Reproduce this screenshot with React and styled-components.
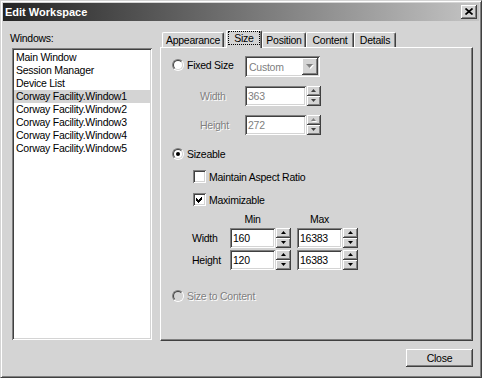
import React from 'react';
import styled, { createGlobalStyle, css } from 'styled-components';

const FACE = '#d4d4d4';

const GlobalStyle = createGlobalStyle`
  html, body { margin: 0; padding: 0; background: ${FACE}; }
  body {
    font-family: "Liberation Sans", Arial, sans-serif;
    font-size: 10.5px;
    letter-spacing: -0.25px;
    color: #000;
  }
  * { box-sizing: border-box; }
`;

const raised = css`
  box-shadow: inset -1px -1px #404040, inset 1px 1px #fff,
    inset -2px -2px #808080, inset 2px 2px ${FACE};
`;

const sunken = css`
  box-shadow: inset 1px 1px #808080, inset -1px -1px #fff,
    inset 2px 2px #404040, inset -2px -2px ${FACE};
`;

const Window = styled.div`
  width: 482px;
  height: 378px;
  display: flex;
  flex-direction: column;
  background: ${FACE};
  border: 1px solid;
  border-color: ${FACE} #404040 #404040 ${FACE};
  box-shadow: inset 1px 1px #fff, inset -1px -1px #808080;
  padding: 2px;
`;

const TitleBar = styled.div`
  height: 18px;
  flex: none;
  display: flex;
  align-items: center;
  justify-content: space-between;
  padding: 0 2px 0 2px;
  background: linear-gradient(90deg, #242424 0%, #c4c4c4 100%);
`;

const Title = styled.span`
  color: #fff;
  font-weight: bold;
  font-size: 11px;
  letter-spacing: 0;
`;

const CaptionButton = styled.div`
  width: 16px;
  height: 14px;
  background: ${FACE};
  ${raised};
  display: flex;
  align-items: center;
  justify-content: center;
  padding-bottom: 1px;
`;

const Main = styled.div`
  flex: 1;
  display: flex;
  gap: 8px;
  padding: 8px 6px 0 7px;
  min-height: 0;
`;

const LeftColumn = styled.div`
  width: 142px;
  flex: none;
  display: flex;
  flex-direction: column;
  padding-top: 3px;
`;

const FieldLabel = styled.div`
  height: 13px;
  line-height: 13px;
  margin-bottom: 3px;
`;

const ListBox = styled.div`
  flex: 1;
  margin: 0 0 1px 2px;
  background: #fff;
  ${sunken};
  padding: 3px 2px 2px 2px;
`;

const ListItem = styled.div`
  height: 13px;
  line-height: 13px;
  padding-left: 2px;
  white-space: nowrap;
  background: ${(p) => (p.$selected ? FACE : 'transparent')};
`;

const TabControl = styled.div`
  width: 313px;
  flex: none;
  display: flex;
  flex-direction: column;
`;

const TabStrip = styled.div`
  height: 18px;
  flex: none;
  display: flex;
  align-items: flex-end;
  padding-left: 2px;
`;

const Tab = styled.div`
  width: ${(p) => p.$width}px;
  height: ${(p) => (p.$selected ? 18 : 15)}px;
  margin-left: ${(p) => (p.$selected ? 2 : 0)}px;
  margin-bottom: ${(p) => (p.$selected ? -1 : 0)}px;
  position: relative;
  z-index: ${(p) => (p.$selected ? 1 : 0)};
  background: ${FACE};
  border-top: 1px solid #fff;
  border-left: 1px solid #fff;
  border-right: 1px solid #404040;
  border-radius: 2px 2px 0 0;
  box-shadow: inset -1px 0 #808080;
  display: flex;
  align-items: center;
  justify-content: center;
  padding-bottom: ${(p) => (p.$selected ? 3 : 0)}px;
  white-space: nowrap;
`;

const FocusLabel = styled.span`
  border: 1px dotted #000;
  width: 32px;
  text-align: center;
  height: 14px;
  line-height: 12px;
`;

const TabPanel = styled.div`
  flex: 1;
  border: 1px solid;
  border-color: #fff #404040 #404040 #fff;
  box-shadow: inset -1px -1px #808080;
  padding: 8px 0 0 11px;
  display: flex;
  flex-direction: column;
`;

const Row = styled.div`
  display: flex;
  align-items: center;
  margin-top: ${(p) => p.$gap || 0}px;
  padding-left: ${(p) => p.$indent || 0}px;
  height: ${(p) => p.$height}px;
`;

const Option = styled.label`
  display: flex;
  align-items: center;
  gap: 3px;
  width: ${(p) => (p.$width ? `${p.$width}px` : 'auto')};
  margin-top: ${(p) => (p.$lift ? -p.$lift * 2 : 0)}px;
  white-space: nowrap;
`;

const OptionText = styled.span`
  color: ${(p) => (p.$disabled ? '#808080' : '#000')};
  text-shadow: ${(p) => (p.$disabled ? '1px 1px #fff' : 'none')};
`;

const RadioOuter = styled.span`
  width: 12px;
  height: 12px;
  flex: none;
  border-radius: 50%;
  border: 1px solid;
  border-color: #808080 #fff #fff #808080;
  display: flex;
`;

const RadioInner = styled.span`
  flex: 1;
  border-radius: 50%;
  border: 1px solid;
  border-color: #404040 ${FACE} ${FACE} #404040;
  background: ${(p) => (p.$disabled ? FACE : '#fff')};
  display: flex;
  align-items: center;
  justify-content: center;
`;

const RadioDot = styled.span`
  width: 4px;
  height: 4px;
  border-radius: 50%;
  background: #000;
`;

const CheckBox = styled.span`
  width: 13px;
  height: 13px;
  flex: none;
  background: #fff;
  ${sunken};
  display: flex;
  align-items: center;
  justify-content: center;
`;

const Combo = styled.div`
  width: 75px;
  height: 21px;
  background: #fff;
  ${sunken};
  padding: 2px;
  display: flex;
  align-items: center;
`;

const ComboText = styled.span`
  flex: 1;
  padding-left: 2px;
  color: #808080;
`;

const ComboButton = styled.div`
  width: 16px;
  height: 17px;
  background: ${FACE};
  ${raised};
  display: flex;
  align-items: center;
  justify-content: center;
`;

const SideLabel = styled.span`
  width: ${(p) => p.$width}px;
  flex: none;
  color: ${(p) => (p.$disabled ? '#808080' : '#000')};
  text-shadow: ${(p) => (p.$disabled ? '1px 1px #fff' : 'none')};
`;

const SpinField = styled.div`
  display: flex;
  gap: 1px;
  height: 20px;
`;

const TextBox = styled.div`
  width: ${(p) => p.$width}px;
  height: 100%;
  background: #fff;
  ${sunken};
  padding: 0 3px;
  display: flex;
  align-items: center;
  color: ${(p) => (p.$disabled ? '#808080' : '#000')};
`;

const Spin = styled.div`
  width: ${(p) => p.$width}px;
  display: flex;
  flex-direction: column;
`;

const SpinButton = styled.div`
  flex: 1;
  background: ${FACE};
  ${raised};
  display: flex;
  align-items: center;
  justify-content: center;
`;

const LimitsGrid = styled.div`
  display: grid;
  grid-template-columns: 38px 67px 61px;
  grid-template-rows: 13px 20px 20px;
  row-gap: 2px;
  align-items: center;
  margin-top: 7px;
  padding-left: 20px;
`;

const ColumnHead = styled.span`
  width: 45px;
  text-align: center;
  line-height: 13px;
`;

const Footer = styled.div`
  flex: none;
  display: flex;
  justify-content: flex-end;
  padding: 8px 6px 8px 0;
`;

const PushButton = styled.button`
  width: 67px;
  height: 18px;
  padding: 0;
  border: none;
  background: ${FACE};
  ${raised};
  font: inherit;
  letter-spacing: inherit;
  color: #000;
`;

const Arrow = ({ down, color = '#000', shadow }) => (
  <svg width="6" height="4" viewBox="0 0 6 4" style={{ overflow: 'visible' }}>
    {shadow && (
      <polygon
        points={down ? '1,1 6,1 3.5,4' : '1,4 6,4 3.5,1'}
        fill="#fff"
      />
    )}
    <polygon points={down ? '0,0 5,0 2.5,3' : '0,3 5,3 2.5,0'} fill={color} />
  </svg>
);

const ComboArrow = () => (
  <svg width="8" height="5" viewBox="0 0 8 5" style={{ overflow: 'visible' }}>
    <polygon points="1,1 8,1 4.5,5" fill="#fff" />
    <polygon points="0,0 7,0 3.5,4" fill="#808080" />
  </svg>
);

const CloseGlyph = () => (
  <svg width="8" height="7" viewBox="0 0 8 7">
    <path d="M0.5 0.5 L7.5 6.5 M7.5 0.5 L0.5 6.5" stroke="#000" strokeWidth="1.7" />
  </svg>
);

const CheckMark = () => (
  <svg width="7" height="7" viewBox="0 0 7 7" shapeRendering="crispEdges">
    <path d="M0 2 L2 4 L6 0 L6 3 L2 7 L0 5 Z" fill="#000" />
  </svg>
);

const Radio = ({ checked, disabled }) => (
  <RadioOuter>
    <RadioInner $disabled={disabled}>{checked && <RadioDot />}</RadioInner>
  </RadioOuter>
);

const SpinControl = ({ value, width, spinWidth, disabled, upDisabled }) => (
  <SpinField>
    <TextBox $width={width} $disabled={disabled}>{value}</TextBox>
    <Spin $width={spinWidth}>
      <SpinButton>
        <Arrow color={upDisabled ? '#808080' : disabled ? '#404040' : '#000'} shadow={upDisabled} />
      </SpinButton>
      <SpinButton>
        <Arrow down color={disabled ? '#404040' : '#000'} />
      </SpinButton>
    </Spin>
  </SpinField>
);

const windows = [
  'Main Window',
  'Session Manager',
  'Device List',
  'Corway Facility.Window1',
  'Corway Facility.Window2',
  'Corway Facility.Window3',
  'Corway Facility.Window4',
  'Corway Facility.Window5',
];

const tabs = [
  { label: 'Appearance', width: 62 },
  { label: 'Size', width: 36, selected: true },
  { label: 'Position', width: 44 },
  { label: 'Content', width: 48 },
  { label: 'Details', width: 42 },
];

export default function App() {
  return (
    <>
      <GlobalStyle />
      <Window>
        <TitleBar>
          <Title>Edit Workspace</Title>
          <CaptionButton>
            <CloseGlyph />
          </CaptionButton>
        </TitleBar>
        <Main>
          <LeftColumn>
            <FieldLabel>Windows:</FieldLabel>
            <ListBox>
              {windows.map((w, i) => (
                <ListItem key={w} $selected={i === 3}>
                  {w}
                </ListItem>
              ))}
            </ListBox>
          </LeftColumn>
          <TabControl>
            <TabStrip>
              {tabs.map((t) => (
                <Tab key={t.label} $width={t.width} $selected={t.selected}>
                  {t.selected ? <FocusLabel>{t.label}</FocusLabel> : t.label}
                </Tab>
              ))}
            </TabStrip>
            <TabPanel>
              <Row $height={21}>
                <Option $width={73} $lift={2}>
                  <Radio />
                  <OptionText>Fixed Size</OptionText>
                </Option>
                <Combo>
                  <ComboText>Custom</ComboText>
                  <ComboButton>
                    <ComboArrow />
                  </ComboButton>
                </Combo>
              </Row>
              <Row $gap={9} $indent={28} $height={20}>
                <SideLabel $width={45} $disabled>Width</SideLabel>
                <SpinControl value="363" width={61} spinWidth={14} disabled />
              </Row>
              <Row $gap={9} $indent={28} $height={20}>
                <SideLabel $width={45} $disabled>Height</SideLabel>
                <SpinControl value="272" width={61} spinWidth={14} disabled upDisabled />
              </Row>
              <Row $gap={12} $height={13}>
                <Option>
                  <Radio checked />
                  <OptionText>Sizeable</OptionText>
                </Option>
              </Row>
              <Row $gap={10} $indent={21} $height={13}>
                <Option>
                  <CheckBox />
                  <OptionText>Maintain Aspect Ratio</OptionText>
                </Option>
              </Row>
              <Row $gap={10} $indent={21} $height={13}>
                <Option>
                  <CheckBox>
                    <CheckMark />
                  </CheckBox>
                  <OptionText>Maximizable</OptionText>
                </Option>
              </Row>
              <LimitsGrid>
                <span />
                <ColumnHead>Min</ColumnHead>
                <ColumnHead>Max</ColumnHead>
                <SideLabel $width={38}>Width</SideLabel>
                <SpinControl value="160" width={45} spinWidth={15} />
                <SpinControl value="16383" width={45} spinWidth={15} />
                <SideLabel $width={38}>Height</SideLabel>
                <SpinControl value="120" width={45} spinWidth={15} />
                <SpinControl value="16383" width={45} spinWidth={15} />
              </LimitsGrid>
              <Row $gap={19} $height={13}>
                <Option>
                  <Radio disabled />
                  <OptionText $disabled>Size to Content</OptionText>
                </Option>
              </Row>
            </TabPanel>
          </TabControl>
        </Main>
        <Footer>
          <PushButton>Close</PushButton>
        </Footer>
      </Window>
    </>
  );
}
